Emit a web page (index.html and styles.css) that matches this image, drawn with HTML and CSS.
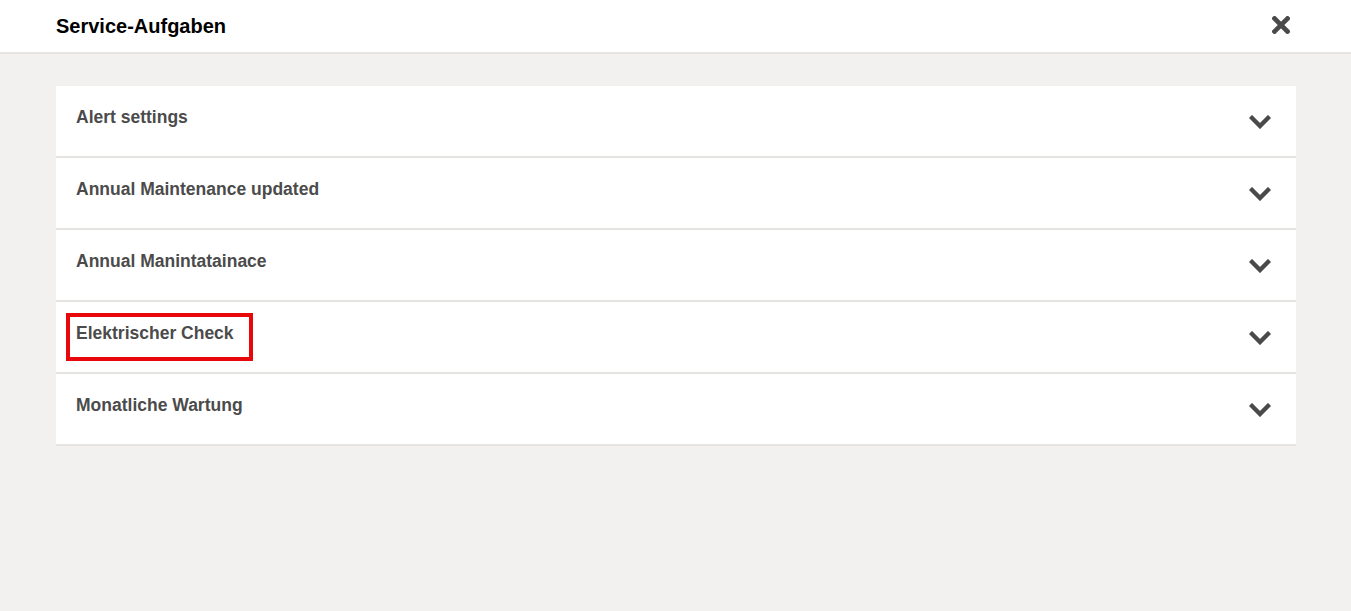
FILE: index.html
```html
<!DOCTYPE html>
<html lang="de">
<head>
    <meta charset="UTF-8">
    <meta name="viewport" content="width=device-width, initial-scale=1.0">
    <title>Service-Aufgaben</title>
    <link rel="stylesheet" href="styles.css">
</head>
<body>
    <header class="topbar">
        <h1 class="topbar-title">Service-Aufgaben</h1>
        <button class="close-btn" type="button" aria-label="Schließen">
            <svg width="18" height="18" viewBox="0 0 18 18"><path d="M2.5 2.5 L15.5 15.5 M15.5 2.5 L2.5 15.5" stroke="#4a4a4a" stroke-width="4.6" stroke-linecap="square" fill="none"/></svg>
        </button>
    </header>

    <main class="content">
        <div class="task-list">
            <div class="task-row">
                <span class="task-title">Alert settings</span>
                <svg class="chevron" width="22" height="14" viewBox="0 0 22 14"><path d="M3 3 L11 11 L19 3" stroke="#4a4a4a" stroke-width="4.4" stroke-linecap="square" fill="none"/></svg>
            </div>
            <div class="task-row">
                <span class="task-title">Annual Maintenance updated</span>
                <svg class="chevron" width="22" height="14" viewBox="0 0 22 14"><path d="M3 3 L11 11 L19 3" stroke="#4a4a4a" stroke-width="4.4" stroke-linecap="square" fill="none"/></svg>
            </div>
            <div class="task-row">
                <span class="task-title">Annual Manintatainace</span>
                <svg class="chevron" width="22" height="14" viewBox="0 0 22 14"><path d="M3 3 L11 11 L19 3" stroke="#4a4a4a" stroke-width="4.4" stroke-linecap="square" fill="none"/></svg>
            </div>
            <div class="task-row">
                <span class="task-title highlighted">Elektrischer Check</span>
                <svg class="chevron" width="22" height="14" viewBox="0 0 22 14"><path d="M3 3 L11 11 L19 3" stroke="#4a4a4a" stroke-width="4.4" stroke-linecap="square" fill="none"/></svg>
            </div>
            <div class="task-row">
                <span class="task-title">Monatliche Wartung</span>
                <svg class="chevron" width="22" height="14" viewBox="0 0 22 14"><path d="M3 3 L11 11 L19 3" stroke="#4a4a4a" stroke-width="4.4" stroke-linecap="square" fill="none"/></svg>
            </div>
        </div>
    </main>
</body>
</html>
```

FILE: styles.css
```css
/* Global */
html, body {
    height: 100%;
}

body {
    margin: 0;
    background: #f2f1ef;
    font-family: "Liberation Sans", Arial, sans-serif;
    color: #4b4b4b;
}

/* Header */
.topbar {
    height: 52px;
    background: #ffffff;
    border-bottom: 2px solid #e5e4e0;
    display: flex;
    align-items: center;
    justify-content: space-between;
    padding: 0 61px 0 56px;
}

.topbar-title {
    margin: 0;
    font-size: 20px;
    font-weight: bold;
    color: #000000;
    line-height: 24px;
}

.close-btn {
    border: none;
    background: none;
    padding: 0;
    width: 18px;
    height: 18px;
    cursor: pointer;
    display: flex;
    margin-bottom: 3px;
}

/* Task list */
.content {
    padding: 32px 55px 0 56px;
}

.task-list {
    background: #ffffff;
}

.task-row {
    height: 70px;
    border-bottom: 2px solid #e5e4e0;
    display: flex;
    align-items: center;
    justify-content: space-between;
    padding: 0 25px 0 20px;
}

.task-title {
    font-size: 17.5px;
    font-weight: bold;
    line-height: 24px;
    margin-bottom: 8px;
    position: relative;
    display: inline-block;
}

.chevron {
    display: block;
    margin-top: 1px;
}

/* Red annotation box */
.highlighted::after {
    content: "";
    position: absolute;
    left: -10px;
    right: -19px;
    top: -8px;
    bottom: -16px;
    border: 4px solid #e8080b;
}
```
